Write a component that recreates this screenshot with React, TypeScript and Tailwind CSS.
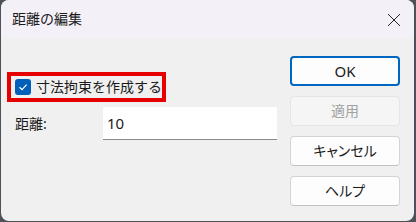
export default function App() {
  const buttons = [
    { label: "OK", cls: "border-2 border-[#0067c0] bg-[#fdfdfd] text-[#1a1a1a] text-[15px]" },
    { label: "適用", cls: "border border-[#e5e5e5] bg-[#f5f5f5] text-[#a2a2a2] text-[14px]" },
    { label: "キャンセル", cls: "border border-[#d4d4d4] border-b-[#c2c2c2] bg-[#fdfdfd] text-[#1a1a1a] text-[14px]" },
    { label: "ヘルプ", cls: "border border-[#d4d4d4] border-b-[#c2c2c2] bg-[#fdfdfd] text-[#1a1a1a] text-[14px]" },
  ];

  return (
    <div className="h-[222px] w-[416px] bg-[#4d5159] pb-px pl-px pr-[2px]">
      <div className="flex h-full flex-col overflow-hidden rounded-[8px] bg-[#f0f0f0] font-['Noto_Sans','Noto_Sans_CJK_JP',sans-serif] text-[#1a1a1a]">
        {/* title bar */}
        <div className="flex h-[38px] items-center justify-between bg-[#f3f0f7] pl-[11px] pr-[13px]">
          <span className="text-[14px] leading-none">距離の編集</span>
          <svg width="14" height="14" viewBox="0 0 14 14" className="mt-[2px]">
            <path d="M1 1 L13 13 M13 1 L1 13" stroke="#262626" strokeWidth="1" fill="none" />
          </svg>
        </div>

        <div className="flex flex-1">
          <div className="w-[289px] pl-[6px] pt-[34px]">
            <div className="flex h-[30px] w-[159px] items-center gap-[5px] border-4 border-[#e60000] pl-[4px]">
              <div className="flex h-[16px] w-[16px] items-center justify-center rounded-[3px] bg-[#005fb8]">
                <svg width="10" height="10" viewBox="0 0 10 10">
                  <path d="M1.5 5.2 L4 7.6 L8.6 2.6" stroke="#fff" strokeWidth="1.2" fill="none" />
                </svg>
              </div>
              <span className="text-[14px] leading-none">寸法拘束を作成する</span>
            </div>

            <div className="mt-[5px] flex items-center">
              <span className="w-[96px] pl-[8px] text-[14px] leading-none">距離:</span>
              <div className="flex h-[33px] w-[174px] items-center border-b border-b-[#8a8a8a] bg-white pl-[4px] text-[15px] leading-none">
                10
              </div>
            </div>
          </div>

          <div className="flex w-[110px] flex-col gap-[10px] pt-[18px]">
            {buttons.map((b) => (
              <div
                key={b.label}
                className={`flex h-[30px] items-center justify-center rounded-[4px] leading-none [font-feature-settings:'palt'] ${b.cls}`}
              >
                {b.label}
              </div>
            ))}
          </div>
        </div>
      </div>
    </div>
  );
}
